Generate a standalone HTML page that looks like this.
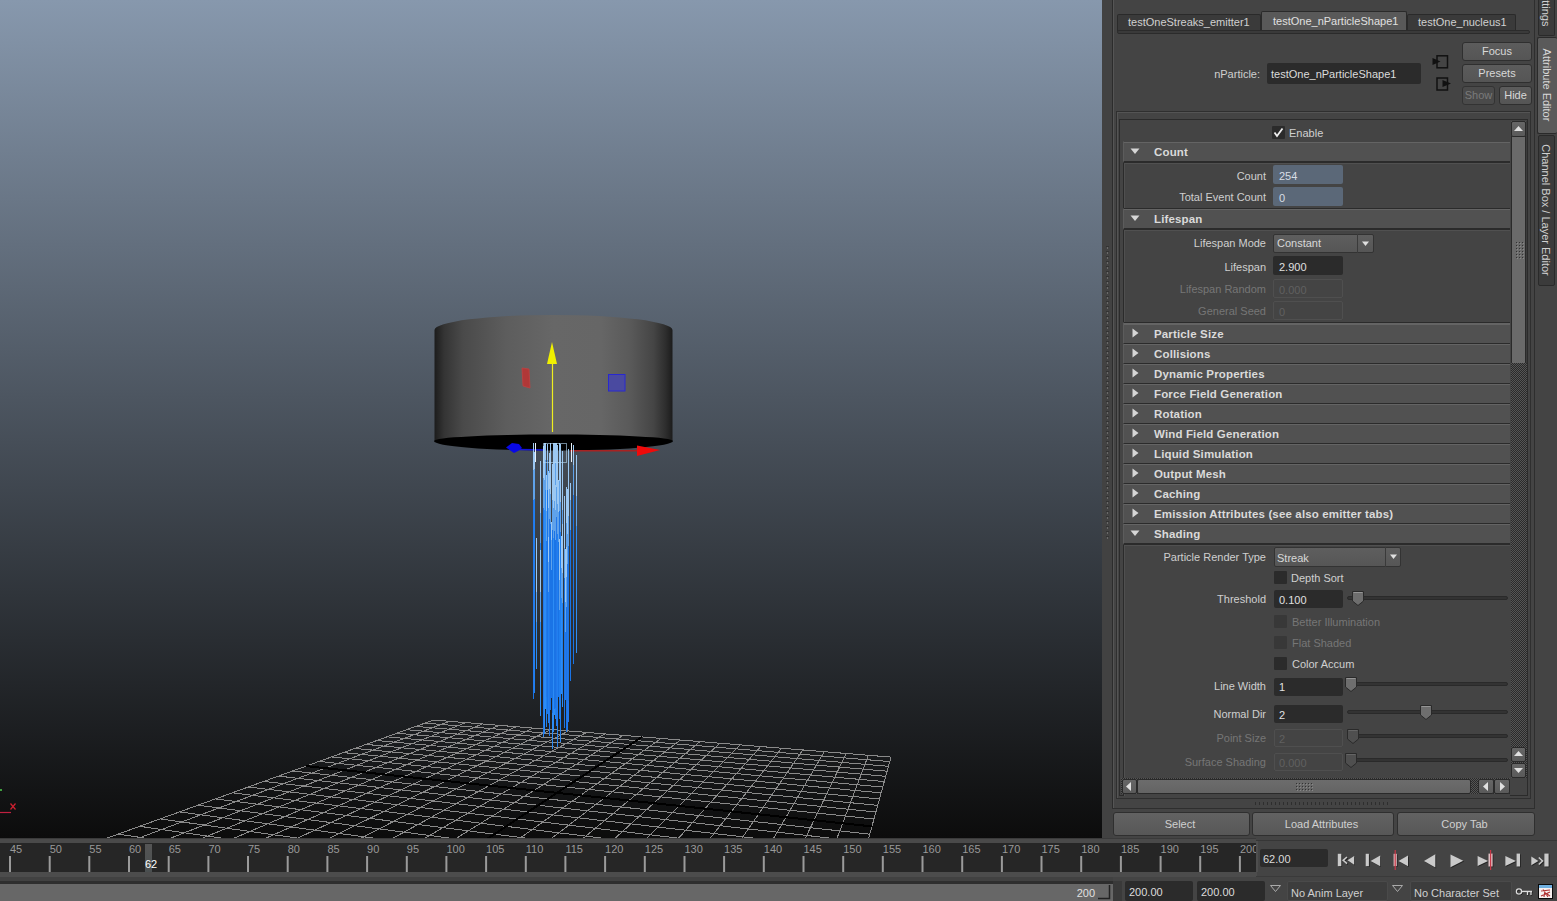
<!DOCTYPE html><html><head><meta charset="utf-8"><style>
*{margin:0;padding:0;box-sizing:border-box}
html,body{width:1557px;height:901px;overflow:hidden;background:#444;font-family:'Liberation Sans',sans-serif;font-size:11px;color:#c8c8c8}
.a{position:absolute}
.t{position:absolute;white-space:nowrap;line-height:1}
.hdr{position:absolute;left:1123px;width:387px;height:20px;background:#525252;border-top:1px solid #5e5e5e;border-bottom:2px solid #2b2b2b}
.hdr .tri{position:absolute;left:8px;top:5px}
.hdr b{position:absolute;left:31px;top:4px;font:bold 12px 'Liberation Sans',sans-serif;color:#d6d6d6;white-space:nowrap}
.lbl{position:absolute;white-space:nowrap;text-align:right;width:200px;color:#cfcfcf}
.dis{color:#7c7c7c}
.fld{position:absolute;background:#2b2b2b;border-radius:2px;color:#d8d8d8;padding-left:4px;white-space:nowrap}
.fdis{position:absolute;background:#444;border:1px solid #4e4e4e;border-radius:2px;color:#6e6e6e;padding-left:3px;white-space:nowrap}
.btn{position:absolute;background:linear-gradient(#636363,#585858);border:1px solid #2d2d2d;border-radius:3px;color:#d0d0d0;text-align:center;white-space:nowrap}
.cb{position:absolute;width:13px;height:13px;background:#2b2b2b;border-radius:1px}
</style></head><body>
<div class="a" style="left:0;top:0;width:1102px;height:838px;background:linear-gradient(#8798ad,#0c0c0c);overflow:hidden">
<svg class="a" style="left:0;top:0" width="1102" height="838" viewBox="0 0 1102 838">
<polygon points="433.5,720.0 891.0,757.1 835.9,957.4 95.5,842.3" fill="#1a1a1a" fill-opacity="0.0"/><g shape-rendering="crispEdges"><line x1="433.5" y1="720.0" x2="95.5" y2="842.3" stroke="#8a8a8a" stroke-width="1"/><line x1="433.5" y1="720.0" x2="891.0" y2="757.1" stroke="#8a8a8a" stroke-width="1"/><line x1="449.6" y1="721.3" x2="118.3" y2="845.8" stroke="#8a8a8a" stroke-width="1"/><line x1="424.8" y1="723.1" x2="889.8" y2="761.6" stroke="#8a8a8a" stroke-width="1"/><line x1="465.9" y1="722.6" x2="141.6" y2="849.5" stroke="#8a8a8a" stroke-width="1"/><line x1="415.9" y1="726.4" x2="888.5" y2="766.3" stroke="#8a8a8a" stroke-width="1"/><line x1="482.4" y1="724.0" x2="165.5" y2="853.2" stroke="#8a8a8a" stroke-width="1"/><line x1="406.6" y1="729.7" x2="887.1" y2="771.2" stroke="#8a8a8a" stroke-width="1"/><line x1="499.1" y1="725.3" x2="189.9" y2="857.0" stroke="#8a8a8a" stroke-width="1"/><line x1="397.0" y1="733.2" x2="885.7" y2="776.3" stroke="#8a8a8a" stroke-width="1"/><line x1="516.1" y1="726.7" x2="214.9" y2="860.9" stroke="#8a8a8a" stroke-width="1"/><line x1="387.0" y1="736.8" x2="884.3" y2="781.6" stroke="#8a8a8a" stroke-width="1"/><line x1="533.3" y1="728.1" x2="240.5" y2="864.8" stroke="#8a8a8a" stroke-width="1"/><line x1="376.7" y1="740.5" x2="882.7" y2="787.1" stroke="#8a8a8a" stroke-width="1"/><line x1="550.8" y1="729.5" x2="266.8" y2="868.9" stroke="#8a8a8a" stroke-width="1"/><line x1="366.0" y1="744.4" x2="881.1" y2="792.9" stroke="#8a8a8a" stroke-width="1"/><line x1="568.5" y1="730.9" x2="293.7" y2="873.1" stroke="#8a8a8a" stroke-width="1"/><line x1="354.9" y1="748.4" x2="879.5" y2="799.0" stroke="#8a8a8a" stroke-width="1"/><line x1="586.5" y1="732.4" x2="321.2" y2="877.4" stroke="#8a8a8a" stroke-width="1"/><line x1="343.4" y1="752.6" x2="877.7" y2="805.4" stroke="#8a8a8a" stroke-width="1"/><line x1="604.7" y1="733.9" x2="349.5" y2="881.8" stroke="#8a8a8a" stroke-width="1"/><line x1="331.4" y1="756.9" x2="875.9" y2="812.0" stroke="#8a8a8a" stroke-width="1"/><line x1="623.2" y1="735.4" x2="378.4" y2="886.3" stroke="#8a8a8a" stroke-width="1"/><line x1="319.0" y1="761.4" x2="874.0" y2="819.0" stroke="#8a8a8a" stroke-width="1"/><line x1="661.0" y1="738.5" x2="438.7" y2="895.6" stroke="#8a8a8a" stroke-width="1"/><line x1="292.5" y1="771.0" x2="869.8" y2="834.2" stroke="#8a8a8a" stroke-width="1"/><line x1="680.4" y1="740.0" x2="470.0" y2="900.5" stroke="#8a8a8a" stroke-width="1"/><line x1="278.4" y1="776.1" x2="867.6" y2="842.3" stroke="#8a8a8a" stroke-width="1"/><line x1="700.0" y1="741.6" x2="502.1" y2="905.5" stroke="#8a8a8a" stroke-width="1"/><line x1="263.7" y1="781.4" x2="865.2" y2="851.0" stroke="#8a8a8a" stroke-width="1"/><line x1="719.9" y1="743.2" x2="535.2" y2="910.7" stroke="#8a8a8a" stroke-width="1"/><line x1="248.3" y1="787.0" x2="862.7" y2="860.1" stroke="#8a8a8a" stroke-width="1"/><line x1="740.2" y1="744.9" x2="569.1" y2="915.9" stroke="#8a8a8a" stroke-width="1"/><line x1="232.3" y1="792.8" x2="860.0" y2="869.7" stroke="#8a8a8a" stroke-width="1"/><line x1="760.7" y1="746.5" x2="604.0" y2="921.4" stroke="#8a8a8a" stroke-width="1"/><line x1="215.5" y1="798.9" x2="857.2" y2="880.0" stroke="#8a8a8a" stroke-width="1"/><line x1="781.6" y1="748.2" x2="639.9" y2="926.9" stroke="#8a8a8a" stroke-width="1"/><line x1="197.8" y1="805.2" x2="854.2" y2="890.9" stroke="#8a8a8a" stroke-width="1"/><line x1="802.8" y1="750.0" x2="676.8" y2="932.7" stroke="#8a8a8a" stroke-width="1"/><line x1="179.4" y1="811.9" x2="851.0" y2="902.5" stroke="#8a8a8a" stroke-width="1"/><line x1="824.3" y1="751.7" x2="714.9" y2="938.6" stroke="#8a8a8a" stroke-width="1"/><line x1="160.0" y1="818.9" x2="847.6" y2="914.8" stroke="#8a8a8a" stroke-width="1"/><line x1="846.2" y1="753.5" x2="754.0" y2="944.7" stroke="#8a8a8a" stroke-width="1"/><line x1="139.6" y1="826.3" x2="844.0" y2="928.0" stroke="#8a8a8a" stroke-width="1"/><line x1="868.4" y1="755.3" x2="794.3" y2="951.0" stroke="#8a8a8a" stroke-width="1"/><line x1="118.1" y1="834.1" x2="840.1" y2="942.2" stroke="#8a8a8a" stroke-width="1"/><line x1="891.0" y1="757.1" x2="835.9" y2="957.4" stroke="#8a8a8a" stroke-width="1"/><line x1="95.5" y1="842.3" x2="835.9" y2="957.4" stroke="#8a8a8a" stroke-width="1"/><line x1="642.0" y1="736.9" x2="408.2" y2="890.9" stroke="#000" stroke-width="2"/><line x1="306.0" y1="766.1" x2="871.9" y2="826.4" stroke="#000" stroke-width="2"/></g>
<defs><linearGradient id="cyl" x1="0" x2="1" y1="0" y2="0">
<stop offset="0" stop-color="#1c1c1c"/><stop offset="0.04" stop-color="#343434"/><stop offset="0.12" stop-color="#4a4a4a"/><stop offset="0.3" stop-color="#5d5d5d"/><stop offset="0.5" stop-color="#676767"/><stop offset="0.7" stop-color="#666"/><stop offset="0.82" stop-color="#5a5a5a"/><stop offset="0.92" stop-color="#454545"/><stop offset="0.97" stop-color="#2e2e2e"/><stop offset="1" stop-color="#1c1c1c"/></linearGradient></defs>
<path d="M434.5,330 A118.5,15 0 0 1 672.5,330 L672.5,441 L434.5,441 Z" fill="url(#cyl)"/>
<path d="M434,441 A119,6.5 0 0 1 673,441 A119,9.5 0 0 1 434,441 Z" fill="#000"/>
<line x1="552.5" y1="432" x2="552.5" y2="360" stroke="#eeee20" stroke-width="1.2"/>
<polygon points="552,342 547,364 557,364" fill="#f0f000"/>
<polygon points="522,368 529,369 530,388 523,386" fill="#b03838" stroke="#c04040" stroke-width="0.8"/>
<rect x="608.5" y="374.5" width="16.5" height="16.5" fill="#4a4aa0" stroke="#2828d0" stroke-width="1"/>
<line x1="518" y1="449.5" x2="546" y2="450" stroke="#1414d8" stroke-width="1.3"/>
<polygon points="506,447.5 512,443 519,444 522,448 518,451 514,453" fill="#0808e6"/>
<line x1="570" y1="450.8" x2="640" y2="450.8" stroke="#a82222" stroke-width="1.6"/>
<polygon points="637,445.5 660,450 637,456" fill="#f00a0a"/>

<line x1="555.5" y1="459" x2="555.5" y2="503" stroke="#9cc8f2" stroke-width="1"/><line x1="555.5" y1="503" x2="555.5" y2="533" stroke="#5fa2ea" stroke-width="1"/><line x1="555.5" y1="533" x2="555.5" y2="719" stroke="#2080f0" stroke-width="1"/><line x1="566.5" y1="487" x2="566.5" y2="523" stroke="#9cc8f2" stroke-width="1"/><line x1="566.5" y1="523" x2="566.5" y2="553" stroke="#5fa2ea" stroke-width="1"/><line x1="566.5" y1="553" x2="566.5" y2="687" stroke="#1a74e6" stroke-width="1"/><line x1="559.5" y1="478" x2="559.5" y2="511" stroke="#9cc8f2" stroke-width="1"/><line x1="559.5" y1="511" x2="559.5" y2="541" stroke="#5fa2ea" stroke-width="1"/><line x1="559.5" y1="541" x2="559.5" y2="719" stroke="#1a74e6" stroke-width="1"/><line x1="568.5" y1="449" x2="568.5" y2="506" stroke="#9cc8f2" stroke-width="1"/><line x1="568.5" y1="506" x2="568.5" y2="536" stroke="#5fa2ea" stroke-width="1"/><line x1="568.5" y1="536" x2="568.5" y2="722" stroke="#2378ea" stroke-width="1"/><line x1="553.5" y1="443" x2="553.5" y2="485" stroke="#9cc8f2" stroke-width="1"/><line x1="553.5" y1="485" x2="553.5" y2="515" stroke="#5fa2ea" stroke-width="1"/><line x1="553.5" y1="515" x2="553.5" y2="710" stroke="#2c8cf4" stroke-width="1"/><line x1="540.5" y1="516" x2="540.5" y2="543" stroke="#9cc8f2" stroke-width="1"/><line x1="540.5" y1="543" x2="540.5" y2="573" stroke="#5fa2ea" stroke-width="1"/><line x1="540.5" y1="573" x2="540.5" y2="685" stroke="#2378ea" stroke-width="1"/><line x1="549.5" y1="462" x2="549.5" y2="497" stroke="#9cc8f2" stroke-width="1"/><line x1="549.5" y1="497" x2="549.5" y2="527" stroke="#5fa2ea" stroke-width="1"/><line x1="549.5" y1="527" x2="549.5" y2="705" stroke="#1a74e6" stroke-width="1"/><line x1="533.5" y1="536" x2="533.5" y2="557" stroke="#9cc8f2" stroke-width="1"/><line x1="533.5" y1="557" x2="533.5" y2="587" stroke="#5fa2ea" stroke-width="1"/><line x1="533.5" y1="587" x2="533.5" y2="699" stroke="#1a74e6" stroke-width="1"/><line x1="553.5" y1="516" x2="553.5" y2="550" stroke="#9cc8f2" stroke-width="1"/><line x1="553.5" y1="550" x2="553.5" y2="580" stroke="#5fa2ea" stroke-width="1"/><line x1="553.5" y1="580" x2="553.5" y2="705" stroke="#2378ea" stroke-width="1"/><line x1="568.5" y1="483" x2="568.5" y2="516" stroke="#9cc8f2" stroke-width="1"/><line x1="568.5" y1="516" x2="568.5" y2="546" stroke="#5fa2ea" stroke-width="1"/><line x1="568.5" y1="546" x2="568.5" y2="701" stroke="#1a74e6" stroke-width="1"/><line x1="566.5" y1="547" x2="566.5" y2="606" stroke="#9cc8f2" stroke-width="1"/><line x1="566.5" y1="606" x2="566.5" y2="636" stroke="#5fa2ea" stroke-width="1"/><line x1="566.5" y1="636" x2="566.5" y2="689" stroke="#1a74e6" stroke-width="1"/><line x1="546.5" y1="502" x2="546.5" y2="541" stroke="#9cc8f2" stroke-width="1"/><line x1="546.5" y1="541" x2="546.5" y2="571" stroke="#5fa2ea" stroke-width="1"/><line x1="546.5" y1="571" x2="546.5" y2="727" stroke="#2080f0" stroke-width="1"/><line x1="553.5" y1="526" x2="553.5" y2="554" stroke="#9cc8f2" stroke-width="1"/><line x1="553.5" y1="554" x2="553.5" y2="584" stroke="#5fa2ea" stroke-width="1"/><line x1="553.5" y1="584" x2="553.5" y2="720" stroke="#2080f0" stroke-width="1"/><line x1="548.5" y1="471" x2="548.5" y2="508" stroke="#9cc8f2" stroke-width="1"/><line x1="548.5" y1="508" x2="548.5" y2="538" stroke="#5fa2ea" stroke-width="1"/><line x1="548.5" y1="538" x2="548.5" y2="712" stroke="#2c8cf4" stroke-width="1"/><line x1="557.5" y1="446" x2="557.5" y2="495" stroke="#9cc8f2" stroke-width="1"/><line x1="557.5" y1="495" x2="557.5" y2="525" stroke="#5fa2ea" stroke-width="1"/><line x1="557.5" y1="525" x2="557.5" y2="735" stroke="#2080f0" stroke-width="1"/><line x1="545.5" y1="443" x2="545.5" y2="460" stroke="#9cc8f2" stroke-width="1"/><line x1="545.5" y1="460" x2="545.5" y2="490" stroke="#5fa2ea" stroke-width="1"/><line x1="545.5" y1="490" x2="545.5" y2="709" stroke="#2c8cf4" stroke-width="1"/><line x1="534.5" y1="452" x2="534.5" y2="469" stroke="#9cc8f2" stroke-width="1"/><line x1="534.5" y1="469" x2="534.5" y2="499" stroke="#5fa2ea" stroke-width="1"/><line x1="534.5" y1="499" x2="534.5" y2="693" stroke="#2080f0" stroke-width="1"/><line x1="547.5" y1="444" x2="547.5" y2="460" stroke="#9cc8f2" stroke-width="1"/><line x1="547.5" y1="460" x2="547.5" y2="490" stroke="#5fa2ea" stroke-width="1"/><line x1="547.5" y1="490" x2="547.5" y2="714" stroke="#1a74e6" stroke-width="1"/><line x1="562.5" y1="451" x2="562.5" y2="510" stroke="#9cc8f2" stroke-width="1"/><line x1="562.5" y1="510" x2="562.5" y2="540" stroke="#5fa2ea" stroke-width="1"/><line x1="562.5" y1="540" x2="562.5" y2="707" stroke="#2c8cf4" stroke-width="1"/><line x1="553.5" y1="455" x2="553.5" y2="510" stroke="#9cc8f2" stroke-width="1"/><line x1="553.5" y1="510" x2="553.5" y2="540" stroke="#5fa2ea" stroke-width="1"/><line x1="553.5" y1="540" x2="553.5" y2="699" stroke="#2378ea" stroke-width="1"/><line x1="540.5" y1="461" x2="540.5" y2="507" stroke="#9cc8f2" stroke-width="1"/><line x1="540.5" y1="507" x2="540.5" y2="537" stroke="#5fa2ea" stroke-width="1"/><line x1="540.5" y1="537" x2="540.5" y2="684" stroke="#2080f0" stroke-width="1"/><line x1="567.5" y1="489" x2="567.5" y2="527" stroke="#9cc8f2" stroke-width="1"/><line x1="567.5" y1="527" x2="567.5" y2="557" stroke="#5fa2ea" stroke-width="1"/><line x1="567.5" y1="557" x2="567.5" y2="680" stroke="#2378ea" stroke-width="1"/><line x1="544.5" y1="548" x2="544.5" y2="575" stroke="#9cc8f2" stroke-width="1"/><line x1="544.5" y1="575" x2="544.5" y2="605" stroke="#5fa2ea" stroke-width="1"/><line x1="544.5" y1="605" x2="544.5" y2="717" stroke="#2c8cf4" stroke-width="1"/><line x1="543.5" y1="479" x2="543.5" y2="513" stroke="#9cc8f2" stroke-width="1"/><line x1="543.5" y1="513" x2="543.5" y2="543" stroke="#5fa2ea" stroke-width="1"/><line x1="543.5" y1="543" x2="543.5" y2="737" stroke="#2c8cf4" stroke-width="1"/><line x1="567.5" y1="491" x2="567.5" y2="534" stroke="#9cc8f2" stroke-width="1"/><line x1="567.5" y1="534" x2="567.5" y2="564" stroke="#5fa2ea" stroke-width="1"/><line x1="567.5" y1="564" x2="567.5" y2="730" stroke="#2378ea" stroke-width="1"/><line x1="556.5" y1="458" x2="556.5" y2="500" stroke="#9cc8f2" stroke-width="1"/><line x1="556.5" y1="500" x2="556.5" y2="530" stroke="#5fa2ea" stroke-width="1"/><line x1="556.5" y1="530" x2="556.5" y2="701" stroke="#2c8cf4" stroke-width="1"/><line x1="554.5" y1="443" x2="554.5" y2="502" stroke="#9cc8f2" stroke-width="1"/><line x1="554.5" y1="502" x2="554.5" y2="532" stroke="#5fa2ea" stroke-width="1"/><line x1="554.5" y1="532" x2="554.5" y2="715" stroke="#2c8cf4" stroke-width="1"/><line x1="552.5" y1="490" x2="552.5" y2="532" stroke="#9cc8f2" stroke-width="1"/><line x1="552.5" y1="532" x2="552.5" y2="562" stroke="#5fa2ea" stroke-width="1"/><line x1="552.5" y1="562" x2="552.5" y2="735" stroke="#1a74e6" stroke-width="1"/><line x1="549.5" y1="459" x2="549.5" y2="488" stroke="#9cc8f2" stroke-width="1"/><line x1="549.5" y1="488" x2="549.5" y2="518" stroke="#5fa2ea" stroke-width="1"/><line x1="549.5" y1="518" x2="549.5" y2="716" stroke="#2378ea" stroke-width="1"/><line x1="560.5" y1="444" x2="560.5" y2="503" stroke="#9cc8f2" stroke-width="1"/><line x1="560.5" y1="503" x2="560.5" y2="533" stroke="#5fa2ea" stroke-width="1"/><line x1="560.5" y1="533" x2="560.5" y2="703" stroke="#1a74e6" stroke-width="1"/><line x1="552.5" y1="521" x2="552.5" y2="544" stroke="#9cc8f2" stroke-width="1"/><line x1="552.5" y1="544" x2="552.5" y2="574" stroke="#5fa2ea" stroke-width="1"/><line x1="552.5" y1="574" x2="552.5" y2="738" stroke="#2378ea" stroke-width="1"/><line x1="560.5" y1="494" x2="560.5" y2="536" stroke="#9cc8f2" stroke-width="1"/><line x1="560.5" y1="536" x2="560.5" y2="566" stroke="#5fa2ea" stroke-width="1"/><line x1="560.5" y1="566" x2="560.5" y2="742" stroke="#2c8cf4" stroke-width="1"/><line x1="551.5" y1="522" x2="551.5" y2="540" stroke="#9cc8f2" stroke-width="1"/><line x1="551.5" y1="540" x2="551.5" y2="570" stroke="#5fa2ea" stroke-width="1"/><line x1="551.5" y1="570" x2="551.5" y2="698" stroke="#1a74e6" stroke-width="1"/><line x1="548.5" y1="537" x2="548.5" y2="562" stroke="#9cc8f2" stroke-width="1"/><line x1="548.5" y1="562" x2="548.5" y2="592" stroke="#5fa2ea" stroke-width="1"/><line x1="548.5" y1="592" x2="548.5" y2="723" stroke="#2080f0" stroke-width="1"/><line x1="576.5" y1="455" x2="576.5" y2="496" stroke="#9cc8f2" stroke-width="1"/><line x1="576.5" y1="496" x2="576.5" y2="526" stroke="#5fa2ea" stroke-width="1"/><line x1="576.5" y1="526" x2="576.5" y2="653" stroke="#2c8cf4" stroke-width="1"/><line x1="559.5" y1="457" x2="559.5" y2="476" stroke="#9cc8f2" stroke-width="1"/><line x1="559.5" y1="476" x2="559.5" y2="506" stroke="#5fa2ea" stroke-width="1"/><line x1="559.5" y1="506" x2="559.5" y2="704" stroke="#2c8cf4" stroke-width="1"/><line x1="546.5" y1="475" x2="546.5" y2="511" stroke="#9cc8f2" stroke-width="1"/><line x1="546.5" y1="511" x2="546.5" y2="541" stroke="#5fa2ea" stroke-width="1"/><line x1="546.5" y1="541" x2="546.5" y2="697" stroke="#2378ea" stroke-width="1"/><line x1="549.5" y1="453" x2="549.5" y2="470" stroke="#9cc8f2" stroke-width="1"/><line x1="549.5" y1="470" x2="549.5" y2="500" stroke="#5fa2ea" stroke-width="1"/><line x1="549.5" y1="500" x2="549.5" y2="718" stroke="#2378ea" stroke-width="1"/><line x1="555.5" y1="550" x2="555.5" y2="609" stroke="#9cc8f2" stroke-width="1"/><line x1="555.5" y1="609" x2="555.5" y2="639" stroke="#5fa2ea" stroke-width="1"/><line x1="555.5" y1="639" x2="555.5" y2="704" stroke="#2378ea" stroke-width="1"/><line x1="555.5" y1="480" x2="555.5" y2="528" stroke="#9cc8f2" stroke-width="1"/><line x1="555.5" y1="528" x2="555.5" y2="558" stroke="#5fa2ea" stroke-width="1"/><line x1="555.5" y1="558" x2="555.5" y2="698" stroke="#2080f0" stroke-width="1"/><line x1="553.5" y1="496" x2="553.5" y2="524" stroke="#9cc8f2" stroke-width="1"/><line x1="553.5" y1="524" x2="553.5" y2="554" stroke="#5fa2ea" stroke-width="1"/><line x1="553.5" y1="554" x2="553.5" y2="723" stroke="#2c8cf4" stroke-width="1"/><line x1="536.5" y1="538" x2="536.5" y2="592" stroke="#9cc8f2" stroke-width="1"/><line x1="536.5" y1="592" x2="536.5" y2="622" stroke="#5fa2ea" stroke-width="1"/><line x1="536.5" y1="622" x2="536.5" y2="669" stroke="#2c8cf4" stroke-width="1"/><line x1="559.5" y1="443" x2="559.5" y2="481" stroke="#9cc8f2" stroke-width="1"/><line x1="559.5" y1="481" x2="559.5" y2="511" stroke="#5fa2ea" stroke-width="1"/><line x1="559.5" y1="511" x2="559.5" y2="705" stroke="#1a74e6" stroke-width="1"/><line x1="559.5" y1="539" x2="559.5" y2="580" stroke="#9cc8f2" stroke-width="1"/><line x1="559.5" y1="580" x2="559.5" y2="610" stroke="#5fa2ea" stroke-width="1"/><line x1="559.5" y1="610" x2="559.5" y2="700" stroke="#2080f0" stroke-width="1"/><line x1="549.5" y1="473" x2="549.5" y2="489" stroke="#9cc8f2" stroke-width="1"/><line x1="549.5" y1="489" x2="549.5" y2="519" stroke="#5fa2ea" stroke-width="1"/><line x1="549.5" y1="519" x2="549.5" y2="736" stroke="#2378ea" stroke-width="1"/><line x1="555.5" y1="443" x2="555.5" y2="463" stroke="#9cc8f2" stroke-width="1"/><line x1="555.5" y1="463" x2="555.5" y2="493" stroke="#5fa2ea" stroke-width="1"/><line x1="555.5" y1="493" x2="555.5" y2="702" stroke="#1a74e6" stroke-width="1"/><line x1="554.5" y1="470" x2="554.5" y2="501" stroke="#9cc8f2" stroke-width="1"/><line x1="554.5" y1="501" x2="554.5" y2="531" stroke="#5fa2ea" stroke-width="1"/><line x1="554.5" y1="531" x2="554.5" y2="709" stroke="#1a74e6" stroke-width="1"/><line x1="573.5" y1="445" x2="573.5" y2="465" stroke="#9cc8f2" stroke-width="1"/><line x1="573.5" y1="465" x2="573.5" y2="495" stroke="#5fa2ea" stroke-width="1"/><line x1="573.5" y1="495" x2="573.5" y2="664" stroke="#1a74e6" stroke-width="1"/><line x1="560.5" y1="521" x2="560.5" y2="536" stroke="#9cc8f2" stroke-width="1"/><line x1="560.5" y1="536" x2="560.5" y2="566" stroke="#5fa2ea" stroke-width="1"/><line x1="560.5" y1="566" x2="560.5" y2="703" stroke="#2378ea" stroke-width="1"/><line x1="533.5" y1="443" x2="533.5" y2="470" stroke="#9cc8f2" stroke-width="1"/><line x1="533.5" y1="470" x2="533.5" y2="500" stroke="#5fa2ea" stroke-width="1"/><line x1="533.5" y1="500" x2="533.5" y2="690" stroke="#2378ea" stroke-width="1"/><line x1="562.5" y1="524" x2="562.5" y2="573" stroke="#9cc8f2" stroke-width="1"/><line x1="562.5" y1="573" x2="562.5" y2="603" stroke="#5fa2ea" stroke-width="1"/><line x1="562.5" y1="603" x2="562.5" y2="698" stroke="#2080f0" stroke-width="1"/><line x1="557.5" y1="445" x2="557.5" y2="504" stroke="#9cc8f2" stroke-width="1"/><line x1="557.5" y1="504" x2="557.5" y2="534" stroke="#5fa2ea" stroke-width="1"/><line x1="557.5" y1="534" x2="557.5" y2="747" stroke="#2080f0" stroke-width="1"/><line x1="543.5" y1="446" x2="543.5" y2="478" stroke="#9cc8f2" stroke-width="1"/><line x1="543.5" y1="478" x2="543.5" y2="508" stroke="#5fa2ea" stroke-width="1"/><line x1="543.5" y1="508" x2="543.5" y2="735" stroke="#2378ea" stroke-width="1"/><line x1="553.5" y1="484" x2="553.5" y2="508" stroke="#9cc8f2" stroke-width="1"/><line x1="553.5" y1="508" x2="553.5" y2="538" stroke="#5fa2ea" stroke-width="1"/><line x1="553.5" y1="538" x2="553.5" y2="732" stroke="#2c8cf4" stroke-width="1"/><line x1="550.5" y1="443" x2="550.5" y2="494" stroke="#9cc8f2" stroke-width="1"/><line x1="550.5" y1="494" x2="550.5" y2="524" stroke="#5fa2ea" stroke-width="1"/><line x1="550.5" y1="524" x2="550.5" y2="710" stroke="#1a74e6" stroke-width="1"/><line x1="556.5" y1="443" x2="556.5" y2="487" stroke="#9cc8f2" stroke-width="1"/><line x1="556.5" y1="487" x2="556.5" y2="517" stroke="#5fa2ea" stroke-width="1"/><line x1="556.5" y1="517" x2="556.5" y2="726" stroke="#2378ea" stroke-width="1"/><line x1="552.5" y1="537" x2="552.5" y2="581" stroke="#9cc8f2" stroke-width="1"/><line x1="552.5" y1="581" x2="552.5" y2="611" stroke="#5fa2ea" stroke-width="1"/><line x1="552.5" y1="611" x2="552.5" y2="749" stroke="#2c8cf4" stroke-width="1"/><line x1="552.5" y1="464" x2="552.5" y2="500" stroke="#9cc8f2" stroke-width="1"/><line x1="552.5" y1="500" x2="552.5" y2="530" stroke="#5fa2ea" stroke-width="1"/><line x1="552.5" y1="530" x2="552.5" y2="713" stroke="#1a74e6" stroke-width="1"/><line x1="555.5" y1="485" x2="555.5" y2="510" stroke="#9cc8f2" stroke-width="1"/><line x1="555.5" y1="510" x2="555.5" y2="540" stroke="#5fa2ea" stroke-width="1"/><line x1="555.5" y1="540" x2="555.5" y2="708" stroke="#1a74e6" stroke-width="1"/><line x1="561.5" y1="536" x2="561.5" y2="568" stroke="#9cc8f2" stroke-width="1"/><line x1="561.5" y1="568" x2="561.5" y2="598" stroke="#5fa2ea" stroke-width="1"/><line x1="561.5" y1="598" x2="561.5" y2="694" stroke="#2c8cf4" stroke-width="1"/><line x1="565.5" y1="549" x2="565.5" y2="602" stroke="#9cc8f2" stroke-width="1"/><line x1="565.5" y1="602" x2="565.5" y2="632" stroke="#5fa2ea" stroke-width="1"/><line x1="565.5" y1="632" x2="565.5" y2="700" stroke="#2378ea" stroke-width="1"/><line x1="564.5" y1="496" x2="564.5" y2="537" stroke="#9cc8f2" stroke-width="1"/><line x1="564.5" y1="537" x2="564.5" y2="567" stroke="#5fa2ea" stroke-width="1"/><line x1="564.5" y1="567" x2="564.5" y2="701" stroke="#2080f0" stroke-width="1"/><line x1="560.5" y1="470" x2="560.5" y2="502" stroke="#9cc8f2" stroke-width="1"/><line x1="560.5" y1="502" x2="560.5" y2="532" stroke="#5fa2ea" stroke-width="1"/><line x1="560.5" y1="532" x2="560.5" y2="735" stroke="#2080f0" stroke-width="1"/><line x1="540.5" y1="481" x2="540.5" y2="513" stroke="#9cc8f2" stroke-width="1"/><line x1="540.5" y1="513" x2="540.5" y2="543" stroke="#5fa2ea" stroke-width="1"/><line x1="540.5" y1="543" x2="540.5" y2="694" stroke="#2080f0" stroke-width="1"/><line x1="544.5" y1="443" x2="544.5" y2="480" stroke="#9cc8f2" stroke-width="1"/><line x1="544.5" y1="480" x2="544.5" y2="510" stroke="#5fa2ea" stroke-width="1"/><line x1="544.5" y1="510" x2="544.5" y2="734" stroke="#2c8cf4" stroke-width="1"/><line x1="570.5" y1="483" x2="570.5" y2="500" stroke="#9cc8f2" stroke-width="1"/><line x1="570.5" y1="500" x2="570.5" y2="530" stroke="#5fa2ea" stroke-width="1"/><line x1="570.5" y1="530" x2="570.5" y2="681" stroke="#1a74e6" stroke-width="1"/><line x1="566.5" y1="548" x2="566.5" y2="577" stroke="#9cc8f2" stroke-width="1"/><line x1="566.5" y1="577" x2="566.5" y2="607" stroke="#5fa2ea" stroke-width="1"/><line x1="566.5" y1="607" x2="566.5" y2="732" stroke="#1a74e6" stroke-width="1"/><line x1="564.5" y1="525" x2="564.5" y2="548" stroke="#9cc8f2" stroke-width="1"/><line x1="564.5" y1="548" x2="564.5" y2="578" stroke="#5fa2ea" stroke-width="1"/><line x1="564.5" y1="578" x2="564.5" y2="728" stroke="#1a74e6" stroke-width="1"/><line x1="540.5" y1="550" x2="540.5" y2="592" stroke="#9cc8f2" stroke-width="1"/><line x1="540.5" y1="592" x2="540.5" y2="622" stroke="#5fa2ea" stroke-width="1"/><line x1="540.5" y1="622" x2="540.5" y2="716" stroke="#2c8cf4" stroke-width="1"/><line x1="558.5" y1="480" x2="558.5" y2="512" stroke="#9cc8f2" stroke-width="1"/><line x1="558.5" y1="512" x2="558.5" y2="542" stroke="#5fa2ea" stroke-width="1"/><line x1="558.5" y1="542" x2="558.5" y2="697" stroke="#1a74e6" stroke-width="1"/><rect x="543.5" y="443.5" width="23" height="19" fill="none" stroke="#b8dcf8" stroke-width="1" opacity="0.6"/><line x1="535.5" y1="443" x2="535.5" y2="462" stroke="#e8f0f8"/><line x1="571.5" y1="443" x2="571.5" y2="462" stroke="#e8f0f8"/>
<line x1="0" y1="812.5" x2="11" y2="812.5" stroke="#c02040" stroke-width="1.2"/><path d="M10.5,803.5 L15.5,809.5 M15.5,803.5 L10.5,809.5" stroke="#d02030" stroke-width="1.2"/><rect x="0" y="789" width="2" height="2" fill="#40a040"/>
</svg></div>
<div class="a" style="left:1102px;top:0;width:11px;height:838px;background:#424242"></div>
<svg class="a" style="left:1105px;top:246px" width="6" height="296"><rect x="1" y="0" width="3" height="1" fill="#333"/><rect x="2" y="1" width="1" height="2" fill="#6a6a6a"/><rect x="1" y="5" width="3" height="1" fill="#333"/><rect x="2" y="6" width="1" height="2" fill="#6a6a6a"/><rect x="1" y="10" width="3" height="1" fill="#333"/><rect x="2" y="11" width="1" height="2" fill="#6a6a6a"/><rect x="1" y="15" width="3" height="1" fill="#333"/><rect x="2" y="16" width="1" height="2" fill="#6a6a6a"/><rect x="1" y="20" width="3" height="1" fill="#333"/><rect x="2" y="21" width="1" height="2" fill="#6a6a6a"/><rect x="1" y="25" width="3" height="1" fill="#333"/><rect x="2" y="26" width="1" height="2" fill="#6a6a6a"/><rect x="1" y="30" width="3" height="1" fill="#333"/><rect x="2" y="31" width="1" height="2" fill="#6a6a6a"/><rect x="1" y="35" width="3" height="1" fill="#333"/><rect x="2" y="36" width="1" height="2" fill="#6a6a6a"/><rect x="1" y="40" width="3" height="1" fill="#333"/><rect x="2" y="41" width="1" height="2" fill="#6a6a6a"/><rect x="1" y="45" width="3" height="1" fill="#333"/><rect x="2" y="46" width="1" height="2" fill="#6a6a6a"/><rect x="1" y="50" width="3" height="1" fill="#333"/><rect x="2" y="51" width="1" height="2" fill="#6a6a6a"/><rect x="1" y="55" width="3" height="1" fill="#333"/><rect x="2" y="56" width="1" height="2" fill="#6a6a6a"/><rect x="1" y="60" width="3" height="1" fill="#333"/><rect x="2" y="61" width="1" height="2" fill="#6a6a6a"/><rect x="1" y="65" width="3" height="1" fill="#333"/><rect x="2" y="66" width="1" height="2" fill="#6a6a6a"/><rect x="1" y="70" width="3" height="1" fill="#333"/><rect x="2" y="71" width="1" height="2" fill="#6a6a6a"/><rect x="1" y="75" width="3" height="1" fill="#333"/><rect x="2" y="76" width="1" height="2" fill="#6a6a6a"/><rect x="1" y="80" width="3" height="1" fill="#333"/><rect x="2" y="81" width="1" height="2" fill="#6a6a6a"/><rect x="1" y="85" width="3" height="1" fill="#333"/><rect x="2" y="86" width="1" height="2" fill="#6a6a6a"/><rect x="1" y="90" width="3" height="1" fill="#333"/><rect x="2" y="91" width="1" height="2" fill="#6a6a6a"/><rect x="1" y="95" width="3" height="1" fill="#333"/><rect x="2" y="96" width="1" height="2" fill="#6a6a6a"/><rect x="1" y="100" width="3" height="1" fill="#333"/><rect x="2" y="101" width="1" height="2" fill="#6a6a6a"/><rect x="1" y="105" width="3" height="1" fill="#333"/><rect x="2" y="106" width="1" height="2" fill="#6a6a6a"/><rect x="1" y="110" width="3" height="1" fill="#333"/><rect x="2" y="111" width="1" height="2" fill="#6a6a6a"/><rect x="1" y="115" width="3" height="1" fill="#333"/><rect x="2" y="116" width="1" height="2" fill="#6a6a6a"/><rect x="1" y="120" width="3" height="1" fill="#333"/><rect x="2" y="121" width="1" height="2" fill="#6a6a6a"/><rect x="1" y="125" width="3" height="1" fill="#333"/><rect x="2" y="126" width="1" height="2" fill="#6a6a6a"/><rect x="1" y="130" width="3" height="1" fill="#333"/><rect x="2" y="131" width="1" height="2" fill="#6a6a6a"/><rect x="1" y="135" width="3" height="1" fill="#333"/><rect x="2" y="136" width="1" height="2" fill="#6a6a6a"/><rect x="1" y="140" width="3" height="1" fill="#333"/><rect x="2" y="141" width="1" height="2" fill="#6a6a6a"/><rect x="1" y="145" width="3" height="1" fill="#333"/><rect x="2" y="146" width="1" height="2" fill="#6a6a6a"/><rect x="1" y="150" width="3" height="1" fill="#333"/><rect x="2" y="151" width="1" height="2" fill="#6a6a6a"/><rect x="1" y="155" width="3" height="1" fill="#333"/><rect x="2" y="156" width="1" height="2" fill="#6a6a6a"/><rect x="1" y="160" width="3" height="1" fill="#333"/><rect x="2" y="161" width="1" height="2" fill="#6a6a6a"/><rect x="1" y="165" width="3" height="1" fill="#333"/><rect x="2" y="166" width="1" height="2" fill="#6a6a6a"/><rect x="1" y="170" width="3" height="1" fill="#333"/><rect x="2" y="171" width="1" height="2" fill="#6a6a6a"/><rect x="1" y="175" width="3" height="1" fill="#333"/><rect x="2" y="176" width="1" height="2" fill="#6a6a6a"/><rect x="1" y="180" width="3" height="1" fill="#333"/><rect x="2" y="181" width="1" height="2" fill="#6a6a6a"/><rect x="1" y="185" width="3" height="1" fill="#333"/><rect x="2" y="186" width="1" height="2" fill="#6a6a6a"/><rect x="1" y="190" width="3" height="1" fill="#333"/><rect x="2" y="191" width="1" height="2" fill="#6a6a6a"/><rect x="1" y="195" width="3" height="1" fill="#333"/><rect x="2" y="196" width="1" height="2" fill="#6a6a6a"/><rect x="1" y="200" width="3" height="1" fill="#333"/><rect x="2" y="201" width="1" height="2" fill="#6a6a6a"/><rect x="1" y="205" width="3" height="1" fill="#333"/><rect x="2" y="206" width="1" height="2" fill="#6a6a6a"/><rect x="1" y="210" width="3" height="1" fill="#333"/><rect x="2" y="211" width="1" height="2" fill="#6a6a6a"/><rect x="1" y="215" width="3" height="1" fill="#333"/><rect x="2" y="216" width="1" height="2" fill="#6a6a6a"/><rect x="1" y="220" width="3" height="1" fill="#333"/><rect x="2" y="221" width="1" height="2" fill="#6a6a6a"/><rect x="1" y="225" width="3" height="1" fill="#333"/><rect x="2" y="226" width="1" height="2" fill="#6a6a6a"/><rect x="1" y="230" width="3" height="1" fill="#333"/><rect x="2" y="231" width="1" height="2" fill="#6a6a6a"/><rect x="1" y="235" width="3" height="1" fill="#333"/><rect x="2" y="236" width="1" height="2" fill="#6a6a6a"/><rect x="1" y="240" width="3" height="1" fill="#333"/><rect x="2" y="241" width="1" height="2" fill="#6a6a6a"/><rect x="1" y="245" width="3" height="1" fill="#333"/><rect x="2" y="246" width="1" height="2" fill="#6a6a6a"/><rect x="1" y="250" width="3" height="1" fill="#333"/><rect x="2" y="251" width="1" height="2" fill="#6a6a6a"/><rect x="1" y="255" width="3" height="1" fill="#333"/><rect x="2" y="256" width="1" height="2" fill="#6a6a6a"/><rect x="1" y="260" width="3" height="1" fill="#333"/><rect x="2" y="261" width="1" height="2" fill="#6a6a6a"/><rect x="1" y="265" width="3" height="1" fill="#333"/><rect x="2" y="266" width="1" height="2" fill="#6a6a6a"/><rect x="1" y="270" width="3" height="1" fill="#333"/><rect x="2" y="271" width="1" height="2" fill="#6a6a6a"/><rect x="1" y="275" width="3" height="1" fill="#333"/><rect x="2" y="276" width="1" height="2" fill="#6a6a6a"/><rect x="1" y="280" width="3" height="1" fill="#333"/><rect x="2" y="281" width="1" height="2" fill="#6a6a6a"/><rect x="1" y="285" width="3" height="1" fill="#333"/><rect x="2" y="286" width="1" height="2" fill="#6a6a6a"/><rect x="1" y="290" width="3" height="1" fill="#333"/><rect x="2" y="291" width="1" height="2" fill="#6a6a6a"/></svg>
<div class="a" style="left:1112px;top:0;width:1px;height:808px;background:#2c2c2c"></div><div class="a" style="left:1113px;top:0;width:1px;height:808px;background:#555"></div>
<div class="a" style="left:1117px;top:14px;width:144px;height:17px;background:#3a3a3a;border:1px solid #2a2a2a;border-bottom:none;border-radius:2px 2px 0 0"></div>
<div class="a" style="left:1261px;top:11px;width:146px;height:20px;background:#595959;border:1px solid #2a2a2a;border-bottom:none;border-radius:2px 2px 0 0"></div>
<div class="a" style="left:1407px;top:14px;width:109px;height:17px;background:#3a3a3a;border:1px solid #2a2a2a;border-bottom:none;border-radius:2px 2px 0 0"></div>
<div class="a" style="left:1117px;top:30px;width:413px;height:4px;background:#3a3a3a;border:1px solid #2b2b2b;border-radius:2px"></div>
<div class="t" style="left:1128px;top:15.69px;font:11px 'Liberation Sans',sans-serif;color:#d0d0d0;">testOneStreaks_emitter1</div>
<div class="t" style="left:1273px;top:14.69px;font:11px 'Liberation Sans',sans-serif;color:#e0e0e0;">testOne_nParticleShape1</div>
<div class="t" style="left:1418px;top:15.69px;font:11px 'Liberation Sans',sans-serif;color:#d0d0d0;">testOne_nucleus1</div>
<div class="t" style="left:860px;width:400px;text-align:right;top:67.69px;font:11px 'Liberation Sans',sans-serif;color:#cfcfcf;">nParticle:</div>
<div class="a" style="left:1267px;top:63px;width:154px;height:21px;background:#2b2b2b;border-radius:2px"></div>
<div class="t" style="left:1271px;top:67.69px;font:11px 'Liberation Sans',sans-serif;color:#dcdcdc;">testOne_nParticleShape1</div>
<svg class="a" style="left:1430px;top:52px" width="24" height="40">
<rect x="7" y="3.8" width="10.5" height="12" fill="none" stroke="#111" stroke-width="1.5"/>
<polygon points="2.5,6 10.5,9.5 2.5,13" fill="#111"/>
<rect x="7" y="26" width="10.5" height="12" fill="none" stroke="#111" stroke-width="1.5"/>
<polygon points="12.5,28 21,31.5 12.5,35" fill="#111"/>
</svg>
<div class="a" style="left:1462px;top:42px;width:70px;height:19px;background:linear-gradient(#5c5c5c,#555);border:1px solid #2f2f2f;border-radius:3px"></div>
<div class="t" style="left:1297px;width:400px;text-align:center;top:44.69px;font:11px 'Liberation Sans',sans-serif;color:#d8d8d8;">Focus</div>
<div class="a" style="left:1462px;top:64px;width:70px;height:19px;background:linear-gradient(#5c5c5c,#555);border:1px solid #2f2f2f;border-radius:3px"></div>
<div class="t" style="left:1297px;width:400px;text-align:center;top:66.69px;font:11px 'Liberation Sans',sans-serif;color:#d8d8d8;">Presets</div>
<div class="a" style="left:1462px;top:86px;width:33px;height:19px;background:#4a4a4a;border:1px solid #333;border-radius:3px"></div>
<div class="t" style="left:1278.5px;width:400px;text-align:center;top:88.69px;font:11px 'Liberation Sans',sans-serif;color:#7a7a7a;">Show</div>
<div class="a" style="left:1499px;top:86px;width:33px;height:19px;background:linear-gradient(#5c5c5c,#555);border:1px solid #2f2f2f;border-radius:3px"></div>
<div class="t" style="left:1315.5px;width:400px;text-align:center;top:88.69px;font:11px 'Liberation Sans',sans-serif;color:#d8d8d8;">Hide</div>
<div class="a" style="left:1534px;top:0px;width:1px;height:809px;background:#2e2e2e;"></div>
<div class="a" style="left:1112px;top:808px;width:423px;height:1px;background:#2e2e2e;"></div>
<div class="a" style="left:1538px;top:0px;width:17px;height:36px;background:#3b3b3b;border:1px solid #2a2a2a;border-top:none;border-radius:0 0 2px 2px"></div>
<div class="a" style="left:1537px;top:37px;width:20px;height:97px;background:#5a5a5a;border:1px solid #2a2a2a;border-right:none;border-radius:2px"></div>
<div class="a" style="left:1538px;top:135px;width:17px;height:151px;background:#3b3b3b;border:1px solid #2a2a2a;border-radius:2px"></div>
<div class="t" style="left:1396px;top:-11px;width:300px;height:12px;text-align:center;font:11px 'Liberation Sans',sans-serif;color:#d0d0d0;transform:rotate(90deg);transform-origin:50% 50%">Tool Settings</div>
<div class="t" style="left:1397px;top:79px;width:300px;height:12px;text-align:center;font:11px 'Liberation Sans',sans-serif;color:#d8d8d8;transform:rotate(90deg);transform-origin:50% 50%">Attribute Editor</div>
<div class="t" style="left:1396px;top:204px;width:300px;height:12px;text-align:center;font:11px 'Liberation Sans',sans-serif;color:#d0d0d0;transform:rotate(90deg);transform-origin:50% 50%">Channel Box / Layer Editor</div>
<div class="a" style="left:1116px;top:111px;width:415px;height:688px;background:#444;border:1px solid #2f2f2f;box-shadow:inset 1px 1px 0 #545454"></div>
<div class="a" style="left:1119px;top:119px;width:409px;height:677px;background:#444;border:1px solid #2b2b2b"></div>
<div class="cb" style="left:1272px;top:126px;width:13px;height:13px"></div>
<svg class="a" style="left:1272px;top:126px" width="13" height="13"><polyline points="2.5,6.5 5,10 10.5,2.5" fill="none" stroke="#eee" stroke-width="1.8"/></svg>
<div class="t" style="left:1289px;top:126.69px;font:11px 'Liberation Sans',sans-serif;color:#d0d0d0;">Enable</div>
<div class="a" style="left:1123px;top:141px;width:387px;height:22px;background:#515151;border-top:1px solid #444;box-shadow:inset 0 1px 0 #646464;border-bottom:2px solid #2b2b2b;border-left:1px solid #5c5c5c"></div><svg class="a" style="left:1129.5px;top:148px" width="10" height="7"><polygon points="0.5,0.5 9.5,0.5 5,6" fill="#d6d6d6"/></svg><div class="t" style="left:1154px;top:145.77px;font:bold 11.5px 'Liberation Sans',sans-serif;color:#dadada;letter-spacing:0.15px">Count</div>
<div class="a" style="left:1123px;top:163px;width:387px;height:45px;background:#444;border-left:1px solid #2b2b2b;box-shadow:inset 1px 1px 0 #505050"></div>
<div class="t" style="left:866px;width:400px;text-align:right;top:169.69px;font:11px 'Liberation Sans',sans-serif;color:#cfcfcf;">Count</div>
<div class="a" style="left:1273px;top:165px;width:70px;height:19px;background:#5b6878;border-radius:2px"></div>
<div class="t" style="left:1279px;top:169.69px;font:11px 'Liberation Sans',sans-serif;color:#d8dde4;">254</div>
<div class="t" style="left:866px;width:400px;text-align:right;top:190.69px;font:11px 'Liberation Sans',sans-serif;color:#cfcfcf;">Total Event Count</div>
<div class="a" style="left:1273px;top:187px;width:70px;height:19px;background:#5b6878;border-radius:2px"></div>
<div class="t" style="left:1279px;top:191.69px;font:11px 'Liberation Sans',sans-serif;color:#d8dde4;">0</div>
<div class="a" style="left:1123px;top:208px;width:387px;height:22px;background:#515151;border-top:1px solid #2b2b2b;box-shadow:inset 0 1px 0 #646464;border-bottom:2px solid #2b2b2b;border-left:1px solid #5c5c5c"></div><svg class="a" style="left:1129.5px;top:215px" width="10" height="7"><polygon points="0.5,0.5 9.5,0.5 5,6" fill="#d6d6d6"/></svg><div class="t" style="left:1154px;top:212.77px;font:bold 11.5px 'Liberation Sans',sans-serif;color:#dadada;letter-spacing:0.15px">Lifespan</div>
<div class="a" style="left:1123px;top:230px;width:387px;height:92px;background:#444;border-left:1px solid #2b2b2b;box-shadow:inset 1px 1px 0 #505050"></div>
<div class="t" style="left:866px;width:400px;text-align:right;top:236.69px;font:11px 'Liberation Sans',sans-serif;color:#cfcfcf;">Lifespan Mode</div>
<div class="a" style="left:1273px;top:234px;width:101px;height:19px;background:linear-gradient(#5e5e5e,#565656);border:1px solid #333;border-radius:2px"></div>
<div class="a" style="left:1357px;top:234px;width:1px;height:19px;background:#3a3a3a;"></div>
<svg class="a" style="left:1361px;top:241px" width="10" height="7"><polygon points="1,0.5 8,0.5 4.5,5" fill="#e0e0e0"/></svg>
<div class="t" style="left:1277px;top:236.69px;font:11px 'Liberation Sans',sans-serif;color:#d8d8d8;">Constant</div>
<div class="t" style="left:866px;width:400px;text-align:right;top:260.69px;font:11px 'Liberation Sans',sans-serif;color:#cfcfcf;">Lifespan</div>
<div class="a" style="left:1273px;top:256px;width:70px;height:19px;background:#2b2b2b;border-radius:2px"></div>
<div class="t" style="left:1279px;top:260.69px;font:11px 'Liberation Sans',sans-serif;color:#e0e0e0;">2.900</div>
<div class="t" style="left:866px;width:400px;text-align:right;top:282.69px;font:11px 'Liberation Sans',sans-serif;color:#767676;">Lifespan Random</div>
<div class="a" style="left:1273px;top:279px;width:70px;height:19px;background:#444;border:1px solid #4f4f4f;border-radius:2px"></div>
<div class="t" style="left:1279px;top:283.69px;font:11px 'Liberation Sans',sans-serif;color:#606060;">0.000</div>
<div class="t" style="left:866px;width:400px;text-align:right;top:304.69px;font:11px 'Liberation Sans',sans-serif;color:#767676;">General Seed</div>
<div class="a" style="left:1273px;top:301px;width:70px;height:19px;background:#444;border:1px solid #4f4f4f;border-radius:2px"></div>
<div class="t" style="left:1279px;top:305.69px;font:11px 'Liberation Sans',sans-serif;color:#606060;">0</div>
<div class="a" style="left:1123px;top:322px;width:387px;height:22px;background:#515151;border-top:1px solid #2b2b2b;box-shadow:inset 0 2px 0 #646464;border-bottom:1px solid #2b2b2b;border-left:1px solid #5c5c5c"></div><svg class="a" style="left:1131.5px;top:328px" width="7" height="10"><polygon points="0.5,0.5 6.5,5 0.5,9.5" fill="#d6d6d6"/></svg><div class="t" style="left:1154px;top:327.77px;font:bold 11.5px 'Liberation Sans',sans-serif;color:#dadada;letter-spacing:0.15px">Particle Size</div>
<div class="a" style="left:1123px;top:343px;width:387px;height:21px;background:#515151;border-top:1px solid #2b2b2b;box-shadow:inset 0 1px 0 #646464;border-bottom:1px solid #2b2b2b;border-left:1px solid #5c5c5c"></div><svg class="a" style="left:1131.5px;top:348px" width="7" height="10"><polygon points="0.5,0.5 6.5,5 0.5,9.5" fill="#d6d6d6"/></svg><div class="t" style="left:1154px;top:347.77px;font:bold 11.5px 'Liberation Sans',sans-serif;color:#dadada;letter-spacing:0.15px">Collisions</div>
<div class="a" style="left:1123px;top:363px;width:387px;height:21px;background:#515151;border-top:1px solid #2b2b2b;box-shadow:inset 0 1px 0 #646464;border-bottom:1px solid #2b2b2b;border-left:1px solid #5c5c5c"></div><svg class="a" style="left:1131.5px;top:368px" width="7" height="10"><polygon points="0.5,0.5 6.5,5 0.5,9.5" fill="#d6d6d6"/></svg><div class="t" style="left:1154px;top:367.77px;font:bold 11.5px 'Liberation Sans',sans-serif;color:#dadada;letter-spacing:0.15px">Dynamic Properties</div>
<div class="a" style="left:1123px;top:383px;width:387px;height:21px;background:#515151;border-top:1px solid #2b2b2b;box-shadow:inset 0 1px 0 #646464;border-bottom:1px solid #2b2b2b;border-left:1px solid #5c5c5c"></div><svg class="a" style="left:1131.5px;top:388px" width="7" height="10"><polygon points="0.5,0.5 6.5,5 0.5,9.5" fill="#d6d6d6"/></svg><div class="t" style="left:1154px;top:387.77px;font:bold 11.5px 'Liberation Sans',sans-serif;color:#dadada;letter-spacing:0.15px">Force Field Generation</div>
<div class="a" style="left:1123px;top:403px;width:387px;height:21px;background:#515151;border-top:1px solid #2b2b2b;box-shadow:inset 0 1px 0 #646464;border-bottom:1px solid #2b2b2b;border-left:1px solid #5c5c5c"></div><svg class="a" style="left:1131.5px;top:408px" width="7" height="10"><polygon points="0.5,0.5 6.5,5 0.5,9.5" fill="#d6d6d6"/></svg><div class="t" style="left:1154px;top:407.77px;font:bold 11.5px 'Liberation Sans',sans-serif;color:#dadada;letter-spacing:0.15px">Rotation</div>
<div class="a" style="left:1123px;top:423px;width:387px;height:21px;background:#515151;border-top:1px solid #2b2b2b;box-shadow:inset 0 1px 0 #646464;border-bottom:1px solid #2b2b2b;border-left:1px solid #5c5c5c"></div><svg class="a" style="left:1131.5px;top:428px" width="7" height="10"><polygon points="0.5,0.5 6.5,5 0.5,9.5" fill="#d6d6d6"/></svg><div class="t" style="left:1154px;top:427.77px;font:bold 11.5px 'Liberation Sans',sans-serif;color:#dadada;letter-spacing:0.15px">Wind Field Generation</div>
<div class="a" style="left:1123px;top:443px;width:387px;height:21px;background:#515151;border-top:1px solid #2b2b2b;box-shadow:inset 0 1px 0 #646464;border-bottom:1px solid #2b2b2b;border-left:1px solid #5c5c5c"></div><svg class="a" style="left:1131.5px;top:448px" width="7" height="10"><polygon points="0.5,0.5 6.5,5 0.5,9.5" fill="#d6d6d6"/></svg><div class="t" style="left:1154px;top:447.77px;font:bold 11.5px 'Liberation Sans',sans-serif;color:#dadada;letter-spacing:0.15px">Liquid Simulation</div>
<div class="a" style="left:1123px;top:463px;width:387px;height:21px;background:#515151;border-top:1px solid #2b2b2b;box-shadow:inset 0 1px 0 #646464;border-bottom:1px solid #2b2b2b;border-left:1px solid #5c5c5c"></div><svg class="a" style="left:1131.5px;top:468px" width="7" height="10"><polygon points="0.5,0.5 6.5,5 0.5,9.5" fill="#d6d6d6"/></svg><div class="t" style="left:1154px;top:467.77px;font:bold 11.5px 'Liberation Sans',sans-serif;color:#dadada;letter-spacing:0.15px">Output Mesh</div>
<div class="a" style="left:1123px;top:483px;width:387px;height:21px;background:#515151;border-top:1px solid #2b2b2b;box-shadow:inset 0 1px 0 #646464;border-bottom:1px solid #2b2b2b;border-left:1px solid #5c5c5c"></div><svg class="a" style="left:1131.5px;top:488px" width="7" height="10"><polygon points="0.5,0.5 6.5,5 0.5,9.5" fill="#d6d6d6"/></svg><div class="t" style="left:1154px;top:487.77px;font:bold 11.5px 'Liberation Sans',sans-serif;color:#dadada;letter-spacing:0.15px">Caching</div>
<div class="a" style="left:1123px;top:503px;width:387px;height:21px;background:#515151;border-top:1px solid #2b2b2b;box-shadow:inset 0 1px 0 #646464;border-bottom:1px solid #2b2b2b;border-left:1px solid #5c5c5c"></div><svg class="a" style="left:1131.5px;top:508px" width="7" height="10"><polygon points="0.5,0.5 6.5,5 0.5,9.5" fill="#d6d6d6"/></svg><div class="t" style="left:1154px;top:507.77px;font:bold 11.5px 'Liberation Sans',sans-serif;color:#dadada;letter-spacing:0.15px">Emission Attributes (see also emitter tabs)</div>
<div class="a" style="left:1123px;top:523px;width:387px;height:22px;background:#515151;border-top:1px solid #2b2b2b;box-shadow:inset 0 1px 0 #646464;border-bottom:2px solid #2b2b2b;border-left:1px solid #5c5c5c"></div><svg class="a" style="left:1129.5px;top:530px" width="10" height="7"><polygon points="0.5,0.5 9.5,0.5 5,6" fill="#d6d6d6"/></svg><div class="t" style="left:1154px;top:527.77px;font:bold 11.5px 'Liberation Sans',sans-serif;color:#dadada;letter-spacing:0.15px">Shading</div>
<div class="a" style="left:1123px;top:545px;width:387px;height:251px;background:#444;border-left:1px solid #2b2b2b;box-shadow:inset 1px 1px 0 #505050"></div>
<div class="t" style="left:866px;width:400px;text-align:right;top:550.69px;font:11px 'Liberation Sans',sans-serif;color:#cfcfcf;">Particle Render Type</div>
<div class="a" style="left:1274px;top:547px;width:127px;height:20px;background:linear-gradient(#5e5e5e,#565656);border:1px solid #333;border-radius:2px"></div>
<div class="a" style="left:1385px;top:547px;width:1px;height:20px;background:#3a3a3a;"></div>
<svg class="a" style="left:1389px;top:554px" width="10" height="7"><polygon points="1,0.5 8,0.5 4.5,5" fill="#e0e0e0"/></svg>
<div class="t" style="left:1277px;top:551.69px;font:11px 'Liberation Sans',sans-serif;color:#d8d8d8;">Streak</div>
<div class="a" style="left:1274px;top:571px;width:13px;height:13px;background:#2b2b2b;border-radius:1px"></div>
<div class="t" style="left:1291px;top:571.69px;font:11px 'Liberation Sans',sans-serif;color:#d0d0d0;">Depth Sort</div>
<div class="t" style="left:866px;width:400px;text-align:right;top:592.69px;font:11px 'Liberation Sans',sans-serif;color:#cfcfcf;">Threshold</div>
<div class="a" style="left:1274px;top:590px;width:69px;height:18px;background:#2b2b2b;border-radius:2px"></div>
<div class="t" style="left:1279px;top:593.69px;font:11px 'Liberation Sans',sans-serif;color:#e0e0e0;">0.100</div>
<div class="a" style="left:1347px;top:596px;width:161px;height:4px;background:#333;border:1px solid #2a2a2a;border-radius:2px"></div><svg class="a" style="left:1352px;top:591px" width="12" height="15"><path d="M0.5,0.5 H11.5 V10 L6,14.5 L0.5,10 Z" fill="#6e6e6e" stroke="#2a2a2a" stroke-width="1"/><path d="M1.5,1.5 H10.5" stroke="#9a9a9a" stroke-width="1" opacity="0.9"/></svg>
<div class="a" style="left:1274px;top:615px;width:13px;height:13px;background:#383838;border-radius:1px"></div>
<div class="t" style="left:1292px;top:615.69px;font:11px 'Liberation Sans',sans-serif;color:#767676;">Better Illumination</div>
<div class="a" style="left:1274px;top:636px;width:13px;height:13px;background:#383838;border-radius:1px"></div>
<div class="t" style="left:1292px;top:636.69px;font:11px 'Liberation Sans',sans-serif;color:#767676;">Flat Shaded</div>
<div class="a" style="left:1274px;top:657px;width:13px;height:13px;background:#2b2b2b;border-radius:1px"></div>
<div class="t" style="left:1292px;top:657.69px;font:11px 'Liberation Sans',sans-serif;color:#d0d0d0;">Color Accum</div>
<div class="t" style="left:866px;width:400px;text-align:right;top:679.69px;font:11px 'Liberation Sans',sans-serif;color:#cfcfcf;">Line Width</div>
<div class="a" style="left:1274px;top:678px;width:69px;height:18px;background:#2b2b2b;border-radius:2px"></div>
<div class="t" style="left:1279px;top:680.69px;font:11px 'Liberation Sans',sans-serif;color:#e0e0e0;">1</div>
<div class="a" style="left:1347px;top:682px;width:161px;height:4px;background:#333;border:1px solid #2a2a2a;border-radius:2px"></div><svg class="a" style="left:1345px;top:677px" width="12" height="15"><path d="M0.5,0.5 H11.5 V10 L6,14.5 L0.5,10 Z" fill="#6e6e6e" stroke="#2a2a2a" stroke-width="1"/><path d="M1.5,1.5 H10.5" stroke="#9a9a9a" stroke-width="1" opacity="0.9"/></svg>
<div class="t" style="left:866px;width:400px;text-align:right;top:707.69px;font:11px 'Liberation Sans',sans-serif;color:#cfcfcf;">Normal Dir</div>
<div class="a" style="left:1274px;top:705px;width:69px;height:18px;background:#2b2b2b;border-radius:2px"></div>
<div class="t" style="left:1279px;top:708.69px;font:11px 'Liberation Sans',sans-serif;color:#e0e0e0;">2</div>
<div class="a" style="left:1347px;top:710px;width:161px;height:4px;background:#333;border:1px solid #2a2a2a;border-radius:2px"></div><svg class="a" style="left:1420px;top:705px" width="12" height="15"><path d="M0.5,0.5 H11.5 V10 L6,14.5 L0.5,10 Z" fill="#6e6e6e" stroke="#2a2a2a" stroke-width="1"/><path d="M1.5,1.5 H10.5" stroke="#9a9a9a" stroke-width="1" opacity="0.9"/></svg>
<div class="t" style="left:866px;width:400px;text-align:right;top:731.69px;font:11px 'Liberation Sans',sans-serif;color:#767676;">Point Size</div>
<div class="a" style="left:1274px;top:729px;width:69px;height:18px;background:#444;border:1px solid #4f4f4f;border-radius:2px"></div>
<div class="t" style="left:1279px;top:732.69px;font:11px 'Liberation Sans',sans-serif;color:#606060;">2</div>
<div class="a" style="left:1347px;top:734px;width:161px;height:4px;background:#333;border:1px solid #2a2a2a;border-radius:2px"></div><svg class="a" style="left:1347px;top:729px" width="12" height="15"><path d="M0.5,0.5 H11.5 V10 L6,14.5 L0.5,10 Z" fill="#4f4f4f" stroke="#2a2a2a" stroke-width="1"/><path d="M1.5,1.5 H10.5" stroke="#9a9a9a" stroke-width="1" opacity="0.3"/></svg>
<div class="t" style="left:866px;width:400px;text-align:right;top:755.69px;font:11px 'Liberation Sans',sans-serif;color:#767676;">Surface Shading</div>
<div class="a" style="left:1274px;top:753px;width:69px;height:18px;background:#444;border:1px solid #4f4f4f;border-radius:2px"></div>
<div class="t" style="left:1279px;top:756.69px;font:11px 'Liberation Sans',sans-serif;color:#606060;">0.000</div>
<div class="a" style="left:1347px;top:758px;width:161px;height:4px;background:#333;border:1px solid #2a2a2a;border-radius:2px"></div><svg class="a" style="left:1345px;top:753px" width="12" height="15"><path d="M0.5,0.5 H11.5 V10 L6,14.5 L0.5,10 Z" fill="#4f4f4f" stroke="#2a2a2a" stroke-width="1"/><path d="M1.5,1.5 H10.5" stroke="#9a9a9a" stroke-width="1" opacity="0.3"/></svg>
<div class="a" style="left:1511px;top:121px;width:16px;height:657px;background:repeating-conic-gradient(#2a2a2a 0 25%,#555 0 50%) 0 0/2px 2px;"></div>
<div class="a" style="left:1511px;top:121px;width:15px;height:16px;background:linear-gradient(#666,#5a5a5a);border:1px solid #2a2a2a;border-radius:2px"></div>
<svg class="a" style="left:1513px;top:125px" width="11" height="8"><polygon points="5.5,1 10,6 1,6" fill="#e0e0e0"/></svg>
<div class="a" style="left:1526px;top:121px;width:1px;height:242px;background:#3c3c3c;"></div>
<div class="a" style="left:1511px;top:137px;width:15px;height:226px;background:#6a6a6a;border-left:1px solid #2a2a2a;border-right:1px solid #2a2a2a"></div>
<svg class="a" style="left:1515px;top:241px" width="9" height="20"><rect x="1" y="1" width="1" height="1" fill="#333"/><rect x="2" y="2" width="1" height="1" fill="#888"/><rect x="1" y="4" width="1" height="1" fill="#333"/><rect x="2" y="5" width="1" height="1" fill="#888"/><rect x="1" y="7" width="1" height="1" fill="#333"/><rect x="2" y="8" width="1" height="1" fill="#888"/><rect x="1" y="10" width="1" height="1" fill="#333"/><rect x="2" y="11" width="1" height="1" fill="#888"/><rect x="1" y="13" width="1" height="1" fill="#333"/><rect x="2" y="14" width="1" height="1" fill="#888"/><rect x="1" y="16" width="1" height="1" fill="#333"/><rect x="2" y="17" width="1" height="1" fill="#888"/><rect x="4" y="1" width="1" height="1" fill="#333"/><rect x="5" y="2" width="1" height="1" fill="#888"/><rect x="4" y="4" width="1" height="1" fill="#333"/><rect x="5" y="5" width="1" height="1" fill="#888"/><rect x="4" y="7" width="1" height="1" fill="#333"/><rect x="5" y="8" width="1" height="1" fill="#888"/><rect x="4" y="10" width="1" height="1" fill="#333"/><rect x="5" y="11" width="1" height="1" fill="#888"/><rect x="4" y="13" width="1" height="1" fill="#333"/><rect x="5" y="14" width="1" height="1" fill="#888"/><rect x="4" y="16" width="1" height="1" fill="#333"/><rect x="5" y="17" width="1" height="1" fill="#888"/><rect x="7" y="1" width="1" height="1" fill="#333"/><rect x="8" y="2" width="1" height="1" fill="#888"/><rect x="7" y="4" width="1" height="1" fill="#333"/><rect x="8" y="5" width="1" height="1" fill="#888"/><rect x="7" y="7" width="1" height="1" fill="#333"/><rect x="8" y="8" width="1" height="1" fill="#888"/><rect x="7" y="10" width="1" height="1" fill="#333"/><rect x="8" y="11" width="1" height="1" fill="#888"/><rect x="7" y="13" width="1" height="1" fill="#333"/><rect x="8" y="14" width="1" height="1" fill="#888"/><rect x="7" y="16" width="1" height="1" fill="#333"/><rect x="8" y="17" width="1" height="1" fill="#888"/></svg>
<div class="a" style="left:1511px;top:747px;width:15px;height:15px;background:linear-gradient(#666,#5a5a5a);border:1px solid #2a2a2a;border-radius:2px"></div>
<svg class="a" style="left:1513px;top:750px" width="11" height="8"><polygon points="5.5,1 10,6 1,6" fill="#e0e0e0"/></svg>
<div class="a" style="left:1511px;top:763px;width:15px;height:15px;background:linear-gradient(#666,#5a5a5a);border:1px solid #2a2a2a;border-radius:2px"></div>
<svg class="a" style="left:1513px;top:767px" width="11" height="8"><polygon points="1,1 10,1 5.5,6" fill="#e0e0e0"/></svg>
<div class="a" style="left:1121px;top:778px;width:389px;height:16px;background:repeating-conic-gradient(#2a2a2a 0 25%,#555 0 50%) 0 0/2px 2px;"></div>
<div class="a" style="left:1122px;top:779px;width:15px;height:15px;background:linear-gradient(#666,#5a5a5a);border:1px solid #2a2a2a;border-radius:2px"></div>
<svg class="a" style="left:1125px;top:781px" width="8" height="11"><polygon points="1,5.5 6,1 6,10" fill="#e0e0e0"/></svg>
<div class="a" style="left:1137px;top:779px;width:334px;height:15px;background:linear-gradient(#6c6c6c,#646464);border:1px solid #2a2a2a;border-radius:2px"></div>
<svg class="a" style="left:1295px;top:782px" width="20" height="10"><rect x="1" y="1" width="1" height="1" fill="#333"/><rect x="2" y="2" width="1" height="1" fill="#888"/><rect x="1" y="4" width="1" height="1" fill="#333"/><rect x="2" y="5" width="1" height="1" fill="#888"/><rect x="1" y="7" width="1" height="1" fill="#333"/><rect x="2" y="8" width="1" height="1" fill="#888"/><rect x="4" y="1" width="1" height="1" fill="#333"/><rect x="5" y="2" width="1" height="1" fill="#888"/><rect x="4" y="4" width="1" height="1" fill="#333"/><rect x="5" y="5" width="1" height="1" fill="#888"/><rect x="4" y="7" width="1" height="1" fill="#333"/><rect x="5" y="8" width="1" height="1" fill="#888"/><rect x="7" y="1" width="1" height="1" fill="#333"/><rect x="8" y="2" width="1" height="1" fill="#888"/><rect x="7" y="4" width="1" height="1" fill="#333"/><rect x="8" y="5" width="1" height="1" fill="#888"/><rect x="7" y="7" width="1" height="1" fill="#333"/><rect x="8" y="8" width="1" height="1" fill="#888"/><rect x="10" y="1" width="1" height="1" fill="#333"/><rect x="11" y="2" width="1" height="1" fill="#888"/><rect x="10" y="4" width="1" height="1" fill="#333"/><rect x="11" y="5" width="1" height="1" fill="#888"/><rect x="10" y="7" width="1" height="1" fill="#333"/><rect x="11" y="8" width="1" height="1" fill="#888"/><rect x="13" y="1" width="1" height="1" fill="#333"/><rect x="14" y="2" width="1" height="1" fill="#888"/><rect x="13" y="4" width="1" height="1" fill="#333"/><rect x="14" y="5" width="1" height="1" fill="#888"/><rect x="13" y="7" width="1" height="1" fill="#333"/><rect x="14" y="8" width="1" height="1" fill="#888"/><rect x="16" y="1" width="1" height="1" fill="#333"/><rect x="17" y="2" width="1" height="1" fill="#888"/><rect x="16" y="4" width="1" height="1" fill="#333"/><rect x="17" y="5" width="1" height="1" fill="#888"/><rect x="16" y="7" width="1" height="1" fill="#333"/><rect x="17" y="8" width="1" height="1" fill="#888"/></svg>
<div class="a" style="left:1478px;top:779px;width:16px;height:15px;background:linear-gradient(#666,#5a5a5a);border:1px solid #2a2a2a;border-radius:2px"></div>
<svg class="a" style="left:1482px;top:781px" width="8" height="11"><polygon points="1,5.5 6,1 6,10" fill="#e0e0e0"/></svg>
<div class="a" style="left:1494px;top:779px;width:16px;height:15px;background:linear-gradient(#666,#5a5a5a);border:1px solid #2a2a2a;border-radius:2px"></div>
<svg class="a" style="left:1498px;top:781px" width="8" height="11"><polygon points="2,1 7,5.5 2,10" fill="#e0e0e0"/></svg>
<div class="a" style="left:1510px;top:778px;width:17px;height:17px;background:#444;"></div>
<div class="a" style="left:1255px;top:802px;width:135px;height:3px;background:repeating-linear-gradient(90deg,#2e2e2e 0 1px,transparent 1px 4px);"></div>
<div class="a" style="left:1113px;top:812px;width:137px;height:24px;background:linear-gradient(#626262,#575757);border:1px solid #2f2f2f;border-radius:3px"></div>
<div class="t" style="left:980.0px;width:400px;text-align:center;top:817.69px;font:11px 'Liberation Sans',sans-serif;color:#d0d0d0;">Select</div>
<div class="a" style="left:1252px;top:812px;width:142px;height:24px;background:linear-gradient(#626262,#575757);border:1px solid #2f2f2f;border-radius:3px"></div>
<div class="t" style="left:1121.5px;width:400px;text-align:center;top:817.69px;font:11px 'Liberation Sans',sans-serif;color:#d0d0d0;">Load Attributes</div>
<div class="a" style="left:1397px;top:812px;width:138px;height:24px;background:linear-gradient(#626262,#575757);border:1px solid #2f2f2f;border-radius:3px"></div>
<div class="t" style="left:1264.5px;width:400px;text-align:center;top:817.69px;font:11px 'Liberation Sans',sans-serif;color:#d0d0d0;">Copy Tab</div>
<div class="a" style="left:0px;top:838px;width:1557px;height:63px;background:#444;"></div>
<div class="a" style="left:0px;top:838px;width:1256px;height:5px;background:#4a4a4a;border-top:1px solid #3a3a3a"></div>
<div class="a" style="left:0px;top:843px;width:1256px;height:29px;background:#262626;"></div>
<div class="a" style="left:0px;top:872px;width:1257px;height:5px;background:#4c4c4c;"></div>
<div class="a" style="left:0px;top:877px;width:1113px;height:4px;background:#414141;"></div>
<svg class="a" style="left:0;top:843px" width="1256" height="29"><rect x="9.0" y="13" width="2" height="16" fill="#9a9a9a"/><rect x="48.7" y="13" width="2" height="16" fill="#9a9a9a"/><rect x="88.3" y="13" width="2" height="16" fill="#9a9a9a"/><rect x="128.0" y="13" width="2" height="16" fill="#9a9a9a"/><rect x="167.7" y="13" width="2" height="16" fill="#9a9a9a"/><rect x="207.4" y="13" width="2" height="16" fill="#9a9a9a"/><rect x="247.0" y="13" width="2" height="16" fill="#9a9a9a"/><rect x="286.7" y="13" width="2" height="16" fill="#9a9a9a"/><rect x="326.4" y="13" width="2" height="16" fill="#9a9a9a"/><rect x="366.1" y="13" width="2" height="16" fill="#9a9a9a"/><rect x="405.8" y="13" width="2" height="16" fill="#9a9a9a"/><rect x="445.4" y="13" width="2" height="16" fill="#9a9a9a"/><rect x="485.1" y="13" width="2" height="16" fill="#9a9a9a"/><rect x="524.8" y="13" width="2" height="16" fill="#9a9a9a"/><rect x="564.4" y="13" width="2" height="16" fill="#9a9a9a"/><rect x="604.1" y="13" width="2" height="16" fill="#9a9a9a"/><rect x="643.8" y="13" width="2" height="16" fill="#9a9a9a"/><rect x="683.5" y="13" width="2" height="16" fill="#9a9a9a"/><rect x="723.1" y="13" width="2" height="16" fill="#9a9a9a"/><rect x="762.8" y="13" width="2" height="16" fill="#9a9a9a"/><rect x="802.5" y="13" width="2" height="16" fill="#9a9a9a"/><rect x="842.2" y="13" width="2" height="16" fill="#9a9a9a"/><rect x="881.8" y="13" width="2" height="16" fill="#9a9a9a"/><rect x="921.5" y="13" width="2" height="16" fill="#9a9a9a"/><rect x="961.2" y="13" width="2" height="16" fill="#9a9a9a"/><rect x="1000.9" y="13" width="2" height="16" fill="#9a9a9a"/><rect x="1040.5" y="13" width="2" height="16" fill="#9a9a9a"/><rect x="1080.2" y="13" width="2" height="16" fill="#9a9a9a"/><rect x="1119.9" y="13" width="2" height="16" fill="#9a9a9a"/><rect x="1159.6" y="13" width="2" height="16" fill="#9a9a9a"/><rect x="1199.2" y="13" width="2" height="16" fill="#9a9a9a"/><rect x="1238.9" y="13" width="2" height="16" fill="#9a9a9a"/></svg>
<div class="a" style="left:0;top:0;width:1256px;height:901px;overflow:hidden">
<div class="t" style="left:10.0px;top:842.69px;font:11px 'Liberation Sans',sans-serif;color:#999999;">45</div>
<div class="t" style="left:49.7px;top:842.69px;font:11px 'Liberation Sans',sans-serif;color:#999999;">50</div>
<div class="t" style="left:89.3px;top:842.69px;font:11px 'Liberation Sans',sans-serif;color:#999999;">55</div>
<div class="t" style="left:129.0px;top:842.69px;font:11px 'Liberation Sans',sans-serif;color:#999999;">60</div>
<div class="t" style="left:168.7px;top:842.69px;font:11px 'Liberation Sans',sans-serif;color:#999999;">65</div>
<div class="t" style="left:208.4px;top:842.69px;font:11px 'Liberation Sans',sans-serif;color:#999999;">70</div>
<div class="t" style="left:248.0px;top:842.69px;font:11px 'Liberation Sans',sans-serif;color:#999999;">75</div>
<div class="t" style="left:287.7px;top:842.69px;font:11px 'Liberation Sans',sans-serif;color:#999999;">80</div>
<div class="t" style="left:327.4px;top:842.69px;font:11px 'Liberation Sans',sans-serif;color:#999999;">85</div>
<div class="t" style="left:367.1px;top:842.69px;font:11px 'Liberation Sans',sans-serif;color:#999999;">90</div>
<div class="t" style="left:406.8px;top:842.69px;font:11px 'Liberation Sans',sans-serif;color:#999999;">95</div>
<div class="t" style="left:446.4px;top:842.69px;font:11px 'Liberation Sans',sans-serif;color:#999999;">100</div>
<div class="t" style="left:486.1px;top:842.69px;font:11px 'Liberation Sans',sans-serif;color:#999999;">105</div>
<div class="t" style="left:525.8px;top:842.69px;font:11px 'Liberation Sans',sans-serif;color:#999999;">110</div>
<div class="t" style="left:565.4px;top:842.69px;font:11px 'Liberation Sans',sans-serif;color:#999999;">115</div>
<div class="t" style="left:605.1px;top:842.69px;font:11px 'Liberation Sans',sans-serif;color:#999999;">120</div>
<div class="t" style="left:644.8px;top:842.69px;font:11px 'Liberation Sans',sans-serif;color:#999999;">125</div>
<div class="t" style="left:684.5px;top:842.69px;font:11px 'Liberation Sans',sans-serif;color:#999999;">130</div>
<div class="t" style="left:724.1px;top:842.69px;font:11px 'Liberation Sans',sans-serif;color:#999999;">135</div>
<div class="t" style="left:763.8px;top:842.69px;font:11px 'Liberation Sans',sans-serif;color:#999999;">140</div>
<div class="t" style="left:803.5px;top:842.69px;font:11px 'Liberation Sans',sans-serif;color:#999999;">145</div>
<div class="t" style="left:843.2px;top:842.69px;font:11px 'Liberation Sans',sans-serif;color:#999999;">150</div>
<div class="t" style="left:882.8px;top:842.69px;font:11px 'Liberation Sans',sans-serif;color:#999999;">155</div>
<div class="t" style="left:922.5px;top:842.69px;font:11px 'Liberation Sans',sans-serif;color:#999999;">160</div>
<div class="t" style="left:962.2px;top:842.69px;font:11px 'Liberation Sans',sans-serif;color:#999999;">165</div>
<div class="t" style="left:1001.9px;top:842.69px;font:11px 'Liberation Sans',sans-serif;color:#999999;">170</div>
<div class="t" style="left:1041.5px;top:842.69px;font:11px 'Liberation Sans',sans-serif;color:#999999;">175</div>
<div class="t" style="left:1081.2px;top:842.69px;font:11px 'Liberation Sans',sans-serif;color:#999999;">180</div>
<div class="t" style="left:1120.9px;top:842.69px;font:11px 'Liberation Sans',sans-serif;color:#999999;">185</div>
<div class="t" style="left:1160.6px;top:842.69px;font:11px 'Liberation Sans',sans-serif;color:#999999;">190</div>
<div class="t" style="left:1200.2px;top:842.69px;font:11px 'Liberation Sans',sans-serif;color:#999999;">195</div>
<div class="t" style="left:1239.9px;top:842.69px;font:11px 'Liberation Sans',sans-serif;color:#999999;">200</div>
</div>
<div class="a" style="left:145px;top:844px;width:7px;height:28px;background:linear-gradient(#555,#4a4f50);"></div>
<div class="t" style="left:145px;top:857.69px;font:11px 'Liberation Sans',sans-serif;color:#ffffff;">62</div>
<div class="a" style="left:1256px;top:840px;width:301px;height:1px;background:#363636;"></div>
<div class="a" style="left:1256px;top:876px;width:301px;height:1px;background:#3a3a3a;"></div>
<div class="a" style="left:1256px;top:841px;width:2px;height:31px;background:#4e4e4e;"></div>
<div class="a" style="left:1260px;top:849px;width:68px;height:18px;background:#2b2b2b;border-radius:2px"></div>
<div class="t" style="left:1263px;top:852.69px;font:11px 'Liberation Sans',sans-serif;color:#dcdcdc;">62.00</div>
<svg class="a" style="left:1330px;top:850px" width="227" height="22"><g fill="#222" stroke="#222" stroke-width="0" transform="translate(0.8,0.8)"><rect x="7.8" y="3.8" width="3.5" height="12.4"/>
<polyline points="17,7 13.2,10.3 17,13.6" fill="none" stroke-width="1.6" stroke="#222"/>
<polygon points="17.5,10.3 24.2,6 24.2,14.7"/>
<rect x="35.7" y="3.8" width="3.2" height="12.4"/><polygon points="40.6,10.9 50.2,5.6 50.2,16.2"/>
<polygon points="68.5,10.9 78,5.6 78,16.2"/>
<polygon points="94,10.9 105.3,4.2 105.3,17.6"/>
<polygon points="120.5,4.4 133.3,10.8 120.5,17.2"/>
<polygon points="147.6,5.9 158.1,11 147.6,16"/>
<polygon points="175.4,5.9 185.9,11 175.4,16"/><rect x="186.6" y="3.6" width="3.4" height="12.9"/>
<polygon points="201.3,6.6 208.4,11 201.3,15.3"/><polyline points="208.8,7.5 212.5,11 208.8,14.5" fill="none" stroke-width="1.6" stroke="#222"/><rect x="214.4" y="3.6" width="4.2" height="12.9"/><rect x="63.6" y="3.8" width="3.2" height="12.4"/><rect x="158.5" y="3.6" width="4.1" height="12.9"/></g><g fill="#cacaca" stroke="#cacaca" stroke-width="0"><rect x="7.8" y="3.8" width="3.5" height="12.4"/>
<polyline points="17,7 13.2,10.3 17,13.6" fill="none" stroke-width="1.6" stroke="#cacaca"/>
<polygon points="17.5,10.3 24.2,6 24.2,14.7"/>
<rect x="35.7" y="3.8" width="3.2" height="12.4"/><polygon points="40.6,10.9 50.2,5.6 50.2,16.2"/>
<polygon points="68.5,10.9 78,5.6 78,16.2"/>
<polygon points="94,10.9 105.3,4.2 105.3,17.6"/>
<polygon points="120.5,4.4 133.3,10.8 120.5,17.2"/>
<polygon points="147.6,5.9 158.1,11 147.6,16"/>
<polygon points="175.4,5.9 185.9,11 175.4,16"/><rect x="186.6" y="3.6" width="3.4" height="12.9"/>
<polygon points="201.3,6.6 208.4,11 201.3,15.3"/><polyline points="208.8,7.5 212.5,11 208.8,14.5" fill="none" stroke-width="1.6" stroke="#cacaca"/><rect x="214.4" y="3.6" width="4.2" height="12.9"/></g><rect x="63.6" y="3.8" width="3.2" height="12.4" fill="#e0c0c4"/><rect x="158.5" y="3.6" width="4.1" height="12.9" fill="#e0c0c4"/><rect x="64.6" y="-2" width="1.2" height="22" fill="#c83848"/><rect x="160" y="-2" width="1.2" height="22" fill="#c83848"/></svg>
<div class="a" style="left:0px;top:884px;width:1113px;height:17px;background:#676767;"></div>
<div class="a" style="left:0px;top:881px;width:1113px;height:3px;background:#2e2e2e;"></div>
<div class="t" style="left:695px;width:400px;text-align:right;top:886.69px;font:11px 'Liberation Sans',sans-serif;color:#e0e0e0;">200</div>
<svg class="a" style="left:1098px;top:885px" width="14" height="16"><path d="M11.5,0 V13.5 H0" fill="none" stroke="#222" stroke-width="1.5"/></svg>
<div class="a" style="left:1113px;top:881px;width:9px;height:20px;background:#3a3a3a;"></div>
<div class="a" style="left:1125px;top:881px;width:68px;height:20px;background:#2b2b2b;border-radius:2px"></div>
<div class="t" style="left:1129px;top:885.69px;font:11px 'Liberation Sans',sans-serif;color:#dcdcdc;">200.00</div>
<div class="a" style="left:1197px;top:881px;width:68px;height:20px;background:#2b2b2b;border-radius:2px"></div>
<div class="t" style="left:1201px;top:885.69px;font:11px 'Liberation Sans',sans-serif;color:#dcdcdc;">200.00</div>
<svg class="a" style="left:1269px;top:884px" width="14" height="10"><polygon points="1.5,1.5 11.5,1.5 6.5,7.5" fill="none" stroke="#aaa" stroke-width="1"/></svg>
<div class="a" style="left:1287px;top:881px;width:101px;height:20px;background:#3d3d3d;border:1px solid #4a4a4a;border-radius:2px"></div>
<div class="t" style="left:1291px;top:886.69px;font:11px 'Liberation Sans',sans-serif;color:#d0d0d0;">No Anim Layer</div>
<svg class="a" style="left:1391px;top:884px" width="14" height="10"><polygon points="1.5,1.5 11.5,1.5 6.5,7.5" fill="none" stroke="#aaa" stroke-width="1"/></svg>
<div class="a" style="left:1410px;top:881px;width:102px;height:20px;background:#3d3d3d;border:1px solid #4a4a4a;border-radius:2px"></div>
<div class="t" style="left:1414px;top:886.69px;font:11px 'Liberation Sans',sans-serif;color:#d0d0d0;">No Character Set</div>
<svg class="a" style="left:1510px;top:880px" width="47" height="21"><g fill="none" stroke="#111" stroke-width="1.3" transform="translate(0.6,0.6)"><circle cx="9" cy="11.5" r="2.6"/><path d="M11.6,11.5 H22 M17.5,11.5 V15 M21,11.5 V15"/></g><g fill="none" stroke="#ddd" stroke-width="1.3"><circle cx="9" cy="11.5" r="2.6"/><path d="M11.6,11.5 H22 M17.5,11.5 V15 M21,11.5 V15"/></g><rect x="28.5" y="4.5" width="14" height="14" fill="#f6f0f0" stroke="#0a0a0a" stroke-width="1"/><rect x="29" y="5" width="13" height="3" fill="#70b0e0"/><path d="M31,11 L40,10 M33,9.5 L38,17 M31,16 L40,12 M35,10 L34,17 M37,14 L40,16" stroke="#b03030" stroke-width="1.1" fill="none"/></svg>
</body></html>
